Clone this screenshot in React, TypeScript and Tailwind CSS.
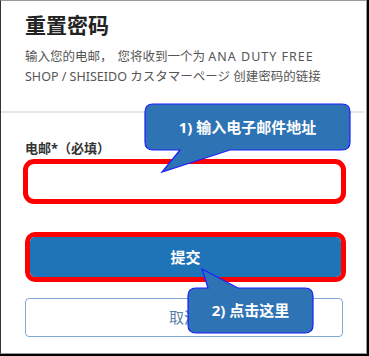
import React from 'react';

const font = { fontFamily: '"Noto Sans", "Noto Sans CJK SC", sans-serif' };

// callout shapes drawn over the form (annotation layer)
const Callouts: React.FC = () => (
  <>
    <svg className="absolute left-0 top-0 pointer-events-none" width="369" height="356" viewBox="0 0 369 356">
      <path
        d="M153,104 H342 Q350,104 350,112 V142 Q350,150 342,150 H230 L162,172 L180,150 H153 Q145,150 145,142 V112 Q145,104 153,104 Z"
        fill="#2e74b5"
        stroke="#1d1dff"
        strokeWidth="1.2"
      />
      <path
        d="M196,288 H208 L202,269 L238,288 H305 Q313,288 313,296 V325 Q313,333 305,333 H196 Q188,333 188,325 V296 Q188,288 196,288 Z"
        fill="#2e74b5"
        stroke="#1d1dff"
        strokeWidth="1.2"
      />
    </svg>
    <div className="absolute left-[145px] top-[104px] w-[205px] h-[46px] flex items-center justify-center text-white font-bold text-[15px]">
      1) 输入电子邮件地址
    </div>
    <div className="absolute left-[188px] top-[288px] w-[125px] h-[45px] flex items-center justify-center text-white font-bold text-[15px]">
      2) 点击这里
    </div>
  </>
);

export default function App() {
  return (
    <div className="relative w-[369px] h-[356px] bg-white border-r-2 border-b-2 border-black overflow-hidden" style={font}>
      <div className="h-full w-full border border-[#9a9a9a] border-l-[#333]">
        {/* header */}
        <div className="px-[24px] pt-[10px]">
          <h1 className="text-[21px] leading-[28px] font-bold text-[#222]">重置密码</h1>
          <p className="mt-[8px] text-[12.5px] leading-[20px] text-[#555] whitespace-nowrap">
            输入您的电邮，<span className="inline-block w-[5px]" />您将收到一个为 <span className="tracking-[1px]">ANA DUTY FREE</span>
            <br />
            SHOP / SHISEIDO カスタマーページ 创建密码的链接
          </p>
        </div>
        <div className="mt-[24px] h-[2px] bg-[#e6e6e6] mr-[2px]" />

        {/* form */}
        <div className="pl-[22px] pr-[20px]">
          <label className="block mt-[26px] pl-[2px] text-[13px] leading-[18px] font-bold text-[#333]">
            电邮*（必填）
          </label>
          <div className="mt-[2px] h-[45px] border-[5px] border-[#ff0000] rounded-[11px] bg-white" />

          <div className="mt-[28px] ml-[2px] h-[50px] border-[5px] border-[#ff0000] rounded-[10px]">
            <button className="w-full h-full rounded-[5px] bg-[#1f73b7] text-white text-[15px] font-semibold flex items-center justify-center">
              提交
            </button>
          </div>

          <button className="mt-[16px] ml-[2px] w-[318px] h-[39px] border border-[#80aad8] rounded-[4px] text-[15px] text-[#5a7fa9] flex items-center justify-center">
            取消
          </button>
        </div>
      </div>
      <Callouts />
    </div>
  );
}
